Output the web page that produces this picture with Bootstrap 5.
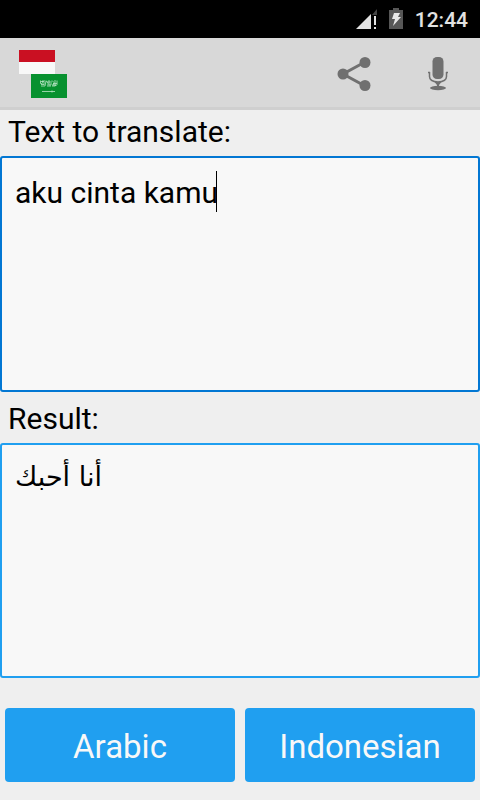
<!DOCTYPE html>
<html lang="en">
<head>
<meta charset="utf-8">
<meta name="viewport" content="width=device-width, initial-scale=1">
<title>Indonesian Arabic Translator</title>
<link href="https://cdn.jsdelivr.net/npm/bootstrap@5.3.0/dist/css/bootstrap.min.css" rel="stylesheet">
<style>
body { background: #efefef; color: #000; font-family: Roboto, "DejaVu Sans", sans-serif; }
.status-bar { height: 38px; background: #000; color: #e2e2e2; padding-right: 12px; }
.status-bar time { font-size: 21px; line-height: 36px; padding-top: 2px; font-weight: 500; }
.app-bar { height: 72px; background: #d8d8d8; border-bottom: 3px solid #cfcfcf; padding: 2px 12px 0 18px; }
.icon-btn { width: 60px; height: 60px; }
.field-label { font-size: 30px; line-height: 36px; padding: 4px 8px 6px; }
.field-label.result { padding: 9px 8px 6px; }
.field-box { flex: 1 1 0; }
.field { border: 2px solid #209ff0; border-radius: 3px; background: #f8f8f8; color: #000; font-size: 30px; line-height: 36px; padding: 17px 13px; resize: none; overflow: hidden; }
.field:focus { border-color: #0277d3; background: #f8f8f8; color: #000; box-shadow: none; }
.field.source { border-color: #0277d3; }
.field.arabic { font-family: "DejaVu Sans", sans-serif; font-size: 27px; padding-top: 14px; }
.caret { left: 216px; top: 15px; width: 1px; height: 41px; background: #000; }
.actions { padding: 30px 5px 18px; gap: 10px; }
.lang-btn { background: #209ff0; color: #f8f8f8; border: 0; border-radius: 4px; font-size: 33px; line-height: 42px; padding: 18px 4px 14px; }
.lang-btn:hover { background: #0277d3; color: #f8f8f8; }
</style>
<script defer src="https://cdn.jsdelivr.net/npm/bootstrap@5.3.0/dist/js/bootstrap.bundle.min.js"></script>
</head>
<body class="d-flex flex-column min-vh-100">
<div class="status-bar d-flex align-items-center justify-content-end">
  <svg class="me-2" width="24" height="22" viewBox="0 0 24 22" aria-hidden="true">
    <path d="M22 1v6h-5z" fill="#444"/><path d="M1 21L16 6v15z" fill="#e2e2e2"/><path d="M19 8h2v9h-2zM19 19h2v2h-2z" fill="#e2e2e2"/>
  </svg>
  <svg class="me-2" width="20" height="22" viewBox="0 0 20 22" aria-hidden="true">
    <path d="M6 0h6v2h4v19H2V2h4z" fill="#575757"/><path d="M7 5h6l-2 4h3l-8 9 2-7H5z" fill="#e8e8e8"/>
  </svg>
  <time>12:44</time>
</div>
<header class="app-bar d-flex align-items-center justify-content-between">
  <svg width="50" height="50" viewBox="0 0 50 50" role="img" aria-label="Indonesian and Saudi flags">
    <path d="M1 1h36v12H1z" fill="#ca1022"/><path d="M1 13h36v12H1z" fill="#f8f8f8"/>
    <path d="M13 25h36v24H13z" fill="#07912f"/>
    <g fill="none" stroke="#b9e4c5" stroke-width=".8"><path d="M22.500 31.500v3q2 1 2-1v-2M26 31v5M23 37h4l1-5M28 31.500l2 3v2M31 31v5h2v-4M34 31.500l2 2-1 3M37 31v6h-3M39 31.500v4q-1 2-2 1M23 35.500h3M29 37h4M35 34.500h4M23 32.500h3M29 33h3M34 36h4"/><path d="M24 42.500h13M34 41.500v2"/></g>
  </svg>
  <div class="d-flex">
    <button type="button" class="icon-btn btn border-0 p-0 me-4" aria-label="Share">
      <svg width="36" height="38" viewBox="0 0 36 38"><path d="M29 7L7 19l22 12" fill="none" stroke="#707070" stroke-width="3"/><g fill="#707070"><circle cx="29" cy="7.500" r="5.500"/><circle cx="7" cy="19" r="5.500"/><circle cx="29" cy="30.500" r="5.500"/></g></svg>
    </button>
    <button type="button" class="icon-btn btn border-0 p-0" aria-label="Speak">
      <svg width="24" height="38" viewBox="0 0 24 38"><rect x="6.500" y="2" width="11" height="22" rx="4.500" fill="#707070"/><path d="M2 17.500h2M20 17.500h2M3.500 17v4.500q0 5 8.500 5.500 8.500-.5 8.500-5.500V17" fill="none" stroke="#707070" stroke-width="1.500"/><path d="M8.500 27h7l-2.500 3v2h-2v-2z" fill="#707070"/><ellipse cx="12" cy="33" rx="8" ry="2.200" fill="#707070"/></svg>
    </button>
  </div>
</header>
<main class="d-flex flex-column flex-grow-1">
  <label class="field-label" for="source">Text to translate:</label>
  <div class="field-box position-relative d-flex">
    <textarea id="source" class="field source form-control" rows="2" spellcheck="false">aku cinta kamu</textarea>
    <span class="caret position-absolute"></span>
  </div>
  <label class="field-label result" for="result">Result:</label>
  <div class="field-box d-flex">
    <textarea id="result" class="field arabic form-control" rows="2" lang="ar" spellcheck="false">أنا أحبك</textarea>
  </div>
  <div class="actions d-flex">
    <button type="button" class="lang-btn btn col">Arabic</button>
    <button type="button" class="lang-btn btn col">Indonesian</button>
  </div>
</main>
</body>
</html>
